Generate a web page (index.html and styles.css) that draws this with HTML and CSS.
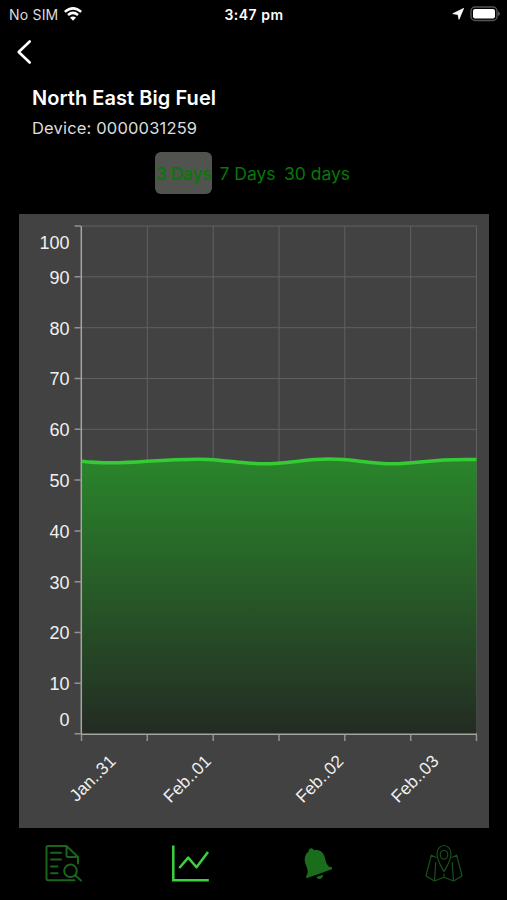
FILE: index.html
```html
<!DOCTYPE html>
<html>
<head>
  <meta charset="utf-8">
  <title>North East Big Fuel</title>
  <link rel="stylesheet" href="styles.css">
</head>
<body>
  <div class="status-bar">
    <div class="carrier">
      <span>No SIM</span>
      <svg width="18" height="14" viewBox="0 0 18 14" fill="none" stroke="#fff" stroke-width="2.5">
        <path d="M.8 4.9Q9-2.2 17.2 4.9M4 8Q9 3.8 14 8"/>
        <path d="M9 13.7L6 10.6Q9 8.4 12 10.6Z" fill="#fff" stroke="none"/>
      </svg>
    </div>
    <div class="time">3:47 pm</div>
    <div class="indicators">
      <svg width="12" height="12" viewBox="0 0 12 12"><path d="M11.6.4L7 11.3 6 6.4.8 5.7Z" fill="#fff" stroke="#fff" stroke-width=".8" stroke-linejoin="round"/></svg>
      <svg width="31" height="16" viewBox="0 0 31 16">
        <rect x="1" y="1" width="26" height="13.5" rx="4" fill="none" stroke="#555" stroke-width="1.4"/>
        <rect x="3" y="3" width="22" height="9.5" rx="2" fill="#fff"/>
        <path d="M28.2 5.2Q31.5 7.7 28.2 10.2Z" fill="#666"/>
      </svg>
    </div>
  </div>

  <div class="nav">
    <svg width="16" height="26" viewBox="0 0 16 26" fill="none" stroke="#fff" stroke-width="2.6" stroke-linecap="round" stroke-linejoin="round">
      <path d="M13.7 2.5L2.7 13 13.7 23.5"/>
    </svg>
  </div>

  <div class="device">
    <h1>North East Big Fuel</h1>
    <p>Device: 0000031259</p>
  </div>

  <div class="range">
    <button class="active">3 Days</button>
    <button>7 Days</button>
    <button>30 days</button>
  </div>

  <div class="chart">
    <svg width="470" height="614" viewBox="19 214 470 614">
      <defs>
        <linearGradient id="fill" gradientUnits="userSpaceOnUse" x1="0" y1="459" x2="0" y2="734">
          <stop offset="0" stop-color="#2a852b"/>
          <stop offset="1" stop-color="#232b23"/>
        </linearGradient>
      </defs>

      <path class="grid" d="M82 226H476.5M82 276.8H476.5M82 327.7H476.5M82 378.5H476.5M82 429.3H476.5M147.3 226V734M213.2 226V734M279 226V734M344.8 226V734M410.7 226V734M476.5 226V734"/>

      <path fill="url(#fill)" d="M82 461.3C104 464 124 463 147 461.3C170 459.8 191 458.8 208 459.4C230 460.6 243 463.8 264 463.8C288 463.8 305 459 329 459C353 459 370 463.7 393 463.7C419 463.7 429 458.6 476.5 459.6V734H82Z"/>
      <path class="line" d="M82 461.3C104 464 124 463 147 461.3C170 459.8 191 458.8 208 459.4C230 460.6 243 463.8 264 463.8C288 463.8 305 459 329 459C353 459 370 463.7 393 463.7C419 463.7 429 458.6 476.5 459.6"/>

      <path class="axis" d="M81.3 226V734.3M81 734.3H477"/>
      <path class="tick" d="M74.5 226H81M74.5 276.8H81M74.5 327.7H81M74.5 378.5H81M74.5 429.3H81M74.5 480.1H81M74.5 530.9H81M74.5 581.7H81M74.5 632.5H81M74.5 683.3H81M74.5 733.8H81"/>
      <path class="tick" d="M81.5 735V741M147.3 735V741M213.2 735V741M279 735V741M344.8 735V741M410.7 735V741M476.5 735V741"/>

      <g class="labels">
        <text x="69.5" y="248.7">100</text>
        <text x="69.5" y="283.7">90</text>
        <text x="69.5" y="334.5">80</text>
        <text x="69.5" y="385.3">70</text>
        <text x="69.5" y="436.1">60</text>
        <text x="69.5" y="486.9">50</text>
        <text x="69.5" y="537.7">40</text>
        <text x="69.5" y="588.5">30</text>
        <text x="69.5" y="639.3">20</text>
        <text x="69.5" y="690">10</text>
        <text x="69.5" y="725.5">0</text>
      </g>
      <g class="labels dates">
        <text transform="translate(116.7 762.3) rotate(-45)">Jan..31</text>
        <text transform="translate(212 762.3) rotate(-45)">Feb..01</text>
        <text transform="translate(344.5 762.3) rotate(-45)">Feb..02</text>
        <text transform="translate(439.7 762.3) rotate(-45)">Feb..03</text>
      </g>
    </svg>
  </div>

  <div class="tabs">
    <div class="tab">
      <svg width="40" height="40" viewBox="-2 0 40 40" fill="none" stroke="#1b641b" stroke-width="2" stroke-linejoin="round" stroke-linecap="round">
        <path d="M33 19.5V13L21.5 2H3Q1.5 2 1.5 3.5V34.5Q1.5 36.2 3 36.2H29.5M21.5 2V11.5Q21.5 13 23 13H33M6 8.8H16M6 15.6H16M6 22.4H12.5M6 29.2H12.5"/>
        <circle cx="25.5" cy="26.8" r="6.3"/>
        <path d="M30 31.3L36 36.6"/>
      </svg>
    </div>
    <div class="tab">
      <svg width="40" height="40" viewBox="0 0 40 40" fill="none" stroke="#3bd13f" stroke-width="2.5">
        <path d="M3.3 1.5V36.2H38.8"/>
        <path d="M9.3 24L18.2 13.6 26.5 23.2 38 8" stroke-linejoin="round"/>
      </svg>
    </div>
    <div class="tab">
      <svg width="40" height="40" viewBox="0 0 40 40" fill="#1a6d1b">
        <path d="M11.6 7.5C11.6 4.2 15.2 3 16.8 6.2C22.5 5.3 26.5 8 27.8 13.5C29.2 19 30 23 35 23.3V25.3L9.4 34.3L9.2 32C12.8 27.5 9 22.5 8.1 18.5C7.1 13.8 8.5 10 11.6 7.5Z"/>
        <path d="M19.5 33L26 30.8C26.5 35 20.5 36.6 19.5 33Z"/>
      </svg>
    </div>
    <div class="tab">
      <svg width="40" height="40" viewBox="0 0 40 40" fill="none" stroke="#17511a" stroke-width="1.2" stroke-linejoin="round">
        <path d="M20 27.5C16.5 21 13 17 13 9.8A7 8.3 0 0 1 27 9.8C27 17 23.5 21 20 27.5Z"/>
        <ellipse cx="20" cy="10.8" rx="3.8" ry="4.3"/>
        <path d="M12.5 13.5L7.3 11.2 2 32 10.5 37 20 33.2 29.5 37 38 32 32.7 11.2 27.5 13.5M11.8 18L10.5 37M28.2 18L29.5 37M20 29.5V33.2"/>
      </svg>
    </div>
  </div>
</body>
</html>
```

FILE: styles.css
```css
body {
  background-color: #000;
  color: #fff;
  font-family: Inter, "Liberation Sans", sans-serif;
  margin: 0;
  height: 900px;
  display: flex;
  flex-direction: column;
  overflow: hidden;
}

.status-bar {
  display: grid;
  grid-template-columns: 1fr auto 1fr;
  align-items: center;
  height: 28px;
  padding: 0 6px 0 9px;
  font-size: 14px;
}

.carrier {
  display: flex;
  align-items: center;
  gap: 6px;
  color: #ddd;
  letter-spacing: 0.2px;
}

.time {
  font-weight: 600;
  font-size: 14px;
  letter-spacing: 0.5px;
  margin-right: 2px;
}

.indicators {
  display: flex;
  justify-content: flex-end;
  align-items: center;
  gap: 6px;
}

.nav {
  height: 57px;
  padding: 11px 0 0 16px;
  box-sizing: border-box;
}

.nav svg {
  display: block;
}

.device {
  height: 67px;
  padding-left: 32px;
}

.device h1 {
  margin: 0;
  font-size: 20px;
  font-weight: 600;
  line-height: 27px;
  letter-spacing: 0.05px;
}

.device p {
  margin: 4px 0 0;
  color: #ddd;
  font-size: 16.5px;
  line-height: 24px;
  letter-spacing: 0.17px;
}

.range {
  display: flex;
  gap: 7px;
  height: 62px;
  padding-left: 155px;
}

.range button {
  width: 57px;
  height: 42px;
  padding: 0;
  border: none;
  border-radius: 6px;
  background: none;
  color: #087708;
  font-family: inherit;
  font-size: 17.5px;
  white-space: nowrap;
}

.range button.active {
  background-color: #51544e;
  font-weight: 500;
  letter-spacing: -0.3px;
}

.range button:last-child {
  width: 68px;
}

.chart {
  width: 469.5px;
  height: 614px;
  margin-left: 19px;
  background-color: #424242;
}

.chart svg {
  display: block;
}

.grid {
  stroke: #616161;
  stroke-width: 1;
}

.axis {
  fill: none;
  stroke: #a4a4a0;
  stroke-width: 1.5;
}

.tick {
  stroke: #929292;
  stroke-width: 1.5;
}

.line {
  fill: none;
  stroke: #34cc35;
  stroke-width: 3.5;
}

.labels {
  fill: #f0f0f0;
  font-family: "Liberation Sans", Arial, sans-serif;
  font-size: 18px;
  text-anchor: end;
}

.dates {
  font-size: 17.3px;
}

.tabs {
  display: grid;
  grid-template-columns: repeat(4, 1fr);
  height: 72px;
}

.tab {
  display: flex;
  justify-content: center;
  padding-top: 16px;
}
```
